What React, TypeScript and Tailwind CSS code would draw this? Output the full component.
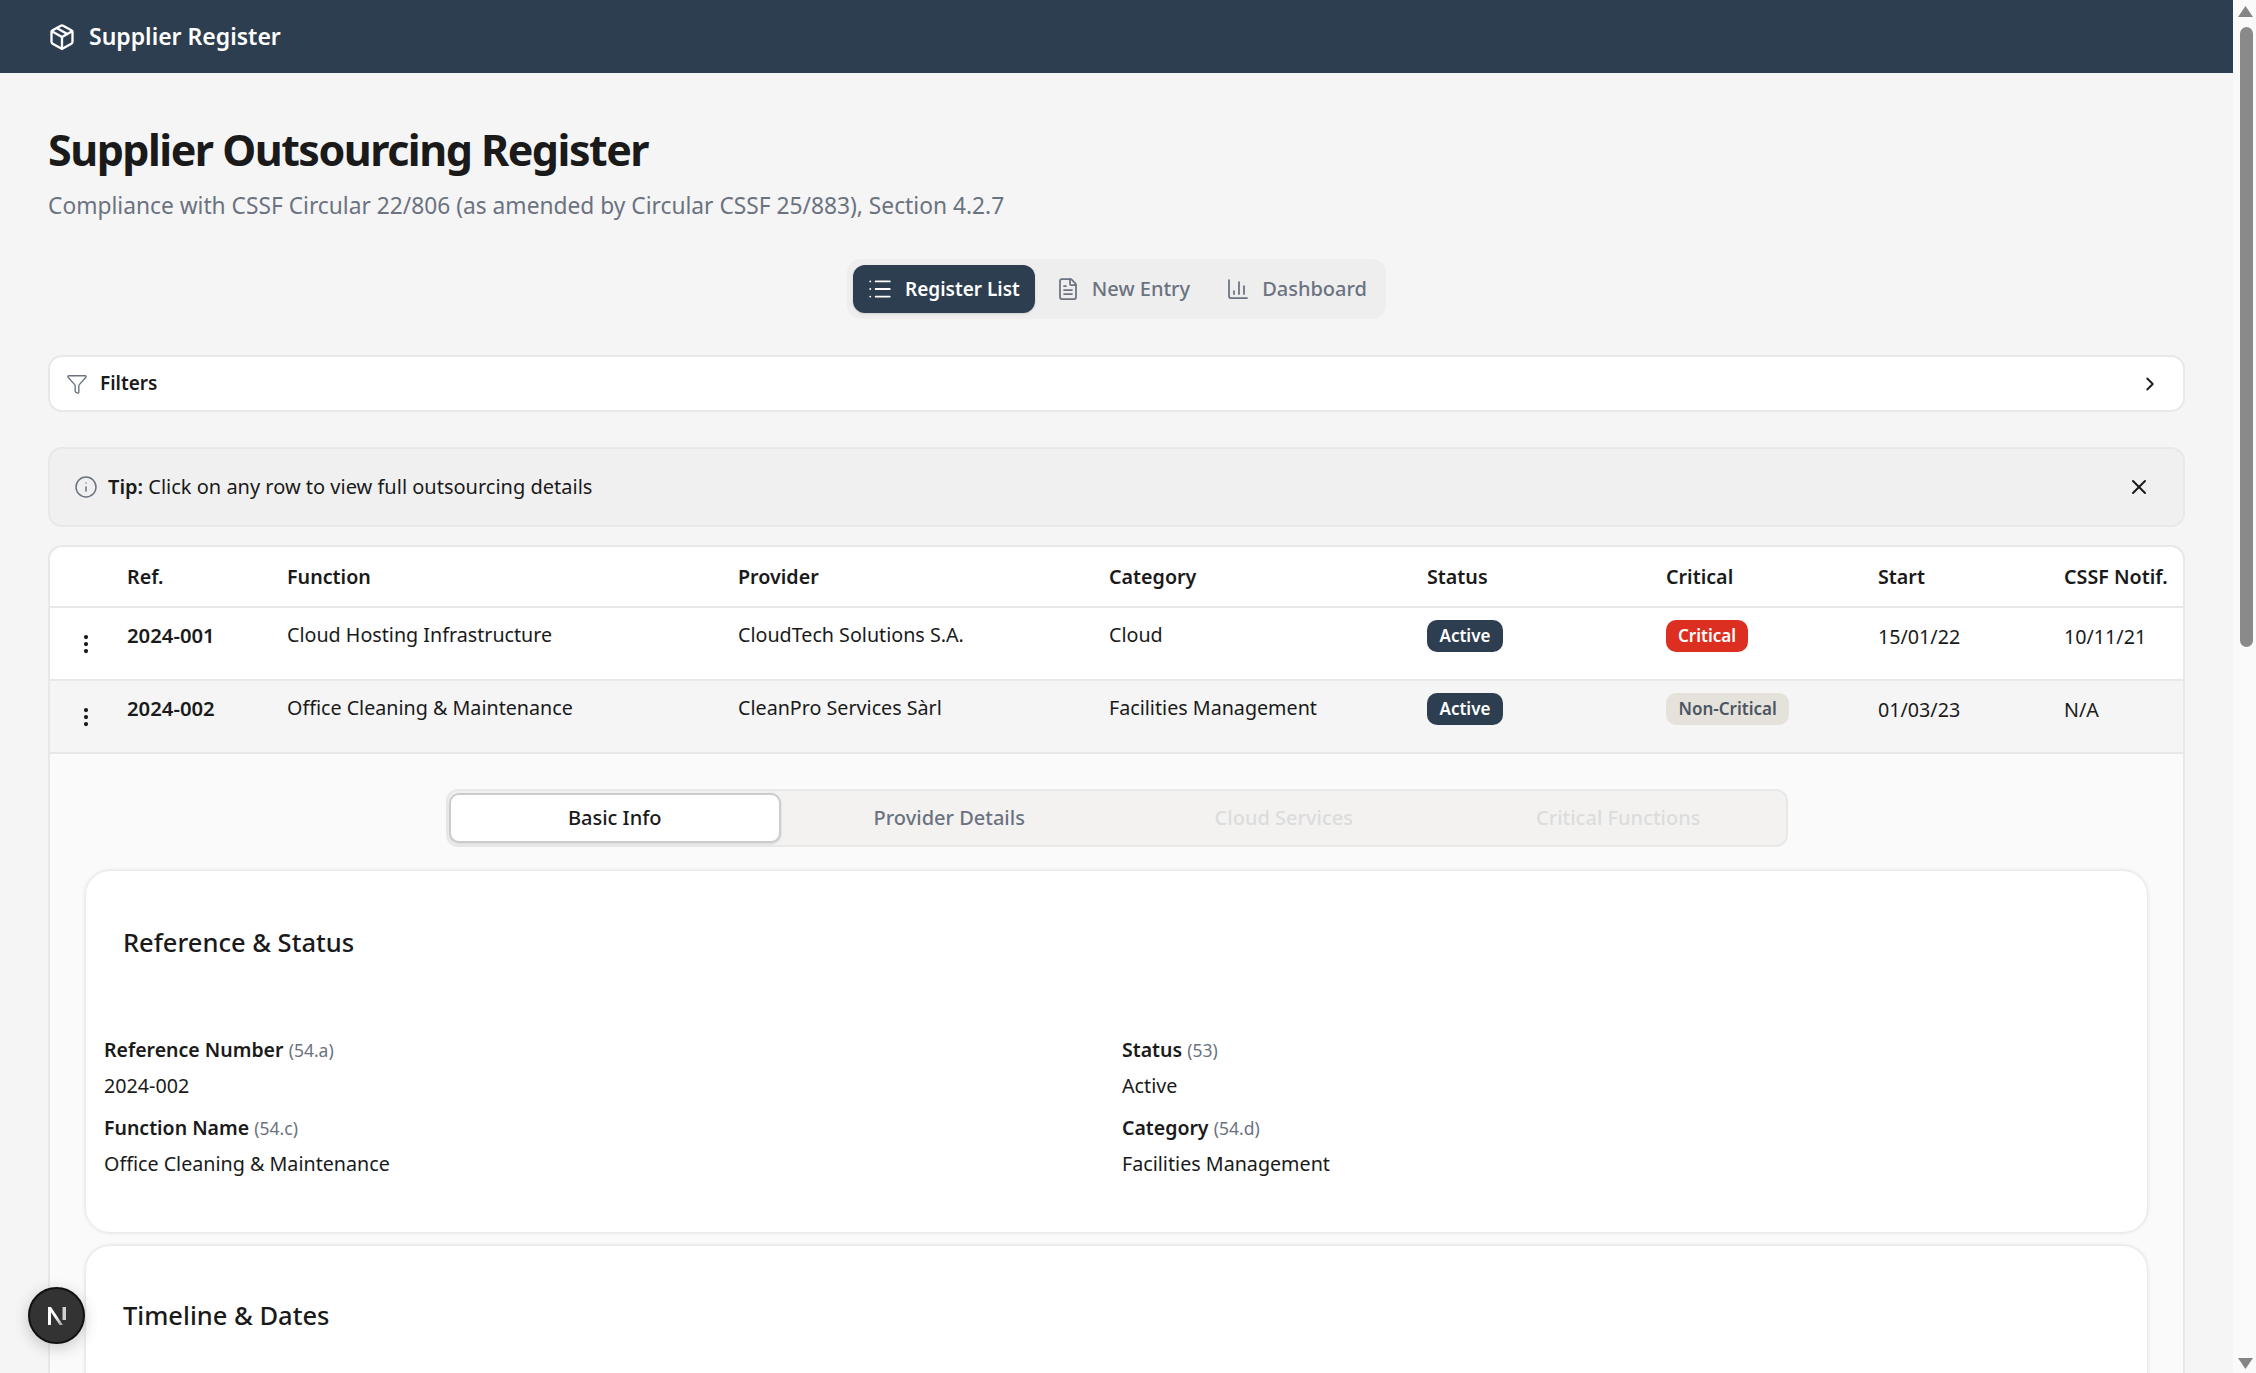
import { BarChart3, ChevronRight, FileText, Filter, Info, List, MoreVertical, Package, X } from "lucide-react";

const rows = [
  { ref: "2024-001", fn: "Cloud Hosting Infrastructure", provider: "CloudTech Solutions S.A.", category: "Cloud", critical: true, start: "15/01/22", notif: "10/11/21" },
  { ref: "2024-002", fn: "Office Cleaning & Maintenance", provider: "CleanPro Services Sàrl", category: "Facilities Management", critical: false, start: "01/03/23", notif: "N/A" },
];

const gridCols = "grid grid-cols-[77px_160px_451px_371px_318px_239px_212px_186px_1fr]";

function Field({ label, code, value }: { label: string; code: string; value: string }) {
  return (
    <div className="h-[78px]">
      <div className="h-[36px] leading-[36px]">
        <span className="text-[19.5px] font-semibold text-[#1a1a1a]">{label}</span>{" "}
        <span className="ml-[1px] text-[17.5px] text-[#6b7280]">({code})</span>
      </div>
      <div className="text-[19.7px] leading-[36px] text-[#1a1a1a]">{value}</div>
    </div>
  );
}

export default function App() {
  return (
    <div className="flex h-[1373px] overflow-hidden bg-[#f5f5f5] font-['Noto_Sans',sans-serif] text-[#1a1a1a]">
      <div className="relative min-w-0 flex-1 overflow-hidden">
        <header className="flex h-[73px] items-center gap-[13px] bg-[#2c3e50] pl-[48px] text-white">
          <Package size={28} strokeWidth={2} />
          <span className="text-[23px] font-semibold">Supplier Register</span>
        </header>

        <main className="px-[48px] pt-[49px]">
          <h1 className="text-[43px] leading-[56px] font-bold tracking-[-1.5px]">Supplier Outsourcing Register</h1>
          <p className="mt-[12px] text-[22.75px] leading-[32px] text-[#6b7280]">
            Compliance with CSSF Circular 22/806 (as amended by Circular CSSF 25/883), Section 4.2.7
          </p>

          <div className="mt-[37px] flex justify-center">
            <div className="flex h-[60px] items-center rounded-[14px] bg-[#eeeeee] pl-[6px] pr-[19px]">
              <button className="flex h-[48px] items-center gap-[12px] rounded-[12px] bg-[#2c3e50] pl-[14px] pr-[15px] text-[19px] font-semibold text-white shadow-sm">
                <List size={26} strokeWidth={1.75} />
                Register List
              </button>
              <button className="ml-[21px] flex items-center gap-[12px] text-[20px] font-medium text-[#6b7280]">
                <FileText size={24} strokeWidth={1.75} />
                New Entry
              </button>
              <button className="ml-[36px] flex items-center gap-[12px] text-[20px] font-medium text-[#6b7280]">
                <BarChart3 size={24} strokeWidth={1.75} />
                Dashboard
              </button>
            </div>
          </div>

          <div className="mt-[36px] flex h-[57px] items-center rounded-[14px] border-2 border-[#e8e8e8] bg-white pl-[16px] pr-[22px]">
            <Filter size={22} strokeWidth={1.5} className="text-[#6b7280]" />
            <span className="ml-[12px] text-[19px] font-semibold">Filters</span>
            <ChevronRight size={22} strokeWidth={2} className="ml-auto" />
          </div>

          <div className="mt-[35px] flex h-[80px] items-center rounded-[14px] border-2 border-[#e8e8e8] bg-[#f0f0f0] pl-[24px] pr-[32px]">
            <Info size={24} strokeWidth={1.5} className="text-[#6b7280]" />
            <span className="ml-[10px] text-[20px]">
              <span className="font-semibold">Tip:</span> Click on any row to view full outsourcing details
            </span>
            <X size={24} strokeWidth={2} className="ml-auto" />
          </div>

          <div className="mt-[18px] rounded-t-[14px] border-x-2 border-t-2 border-[#e8e8e8] bg-[#fafafa]">
            <div className={`${gridCols} h-[61px] items-center rounded-t-[14px] border-b-2 border-[#e8e8e8] bg-white text-[19.7px] font-semibold`}>
              <div className="col-start-2">Ref.</div>
              <div>Function</div>
              <div>Provider</div>
              <div>Category</div>
              <div>Status</div>
              <div>Critical</div>
              <div>Start</div>
              <div>CSSF Notif.</div>
            </div>

            {rows.map((r, i) => (
              <div key={r.ref} className={`${gridCols} h-[73px] border-b-2 border-[#e8e8e8] text-[19.7px] ${i === 0 ? "bg-white" : "bg-[#f5f5f5]"}`}>
                <div className="flex items-center justify-center">
                  <MoreVertical size={24} strokeWidth={2.25} className="ml-[-6px]" />
                </div>
                <div className="pt-[12px] text-[20.3px] font-semibold">{r.ref}</div>
                <div className="pt-[12px]">{r.fn}</div>
                <div className="pt-[12px]">{r.provider}</div>
                <div className="pt-[12px]">{r.category}</div>
                <div className="pt-[12px]">
                  <span className="inline-flex h-[32px] items-center rounded-[10px] bg-[#2c3e50] px-[12.5px] text-[17px] font-semibold text-white">Active</span>
                </div>
                <div className="pt-[12px]">
                  {r.critical ? (
                    <span className="inline-flex h-[32px] items-center rounded-[10px] bg-[#dc2f22] px-[12px] text-[17px] font-semibold text-white">Critical</span>
                  ) : (
                    <span className="inline-flex h-[32px] items-center rounded-[10px] bg-[#e5e2dc] px-[12.5px] text-[17px] font-semibold text-[#4b5563]">Non-Critical</span>
                  )}
                </div>
                <div className="pt-[14px]">{r.start}</div>
                <div className="pt-[14px]">{r.notif}</div>
              </div>
            ))}

            <div className="px-[36px] pt-[35px]">
              <div className="mx-auto grid h-[58px] w-[1342px] grid-cols-4 items-center rounded-[12px] border-2 border-[#e8e8e8] bg-[#f3f2f1] text-[20px] font-medium">
                <div className="mx-[1px] flex h-[50px] items-center justify-center rounded-[10px] border-2 border-[#cccccc] bg-white text-[#1a1a1a] shadow-sm">Basic Info</div>
                <div className="text-center text-[#6b7280]">Provider Details</div>
                <div className="text-center text-[#dcdcdc]">Cloud Services</div>
                <div className="text-center text-[#dcdcdc]">Critical Functions</div>
              </div>

              <section className="mt-[24px] h-[361px] rounded-[24px] bg-white px-[18px] shadow-[0_0_4px_rgba(0,0,0,0.16)]">
                <h2 className="pl-[19px] pt-[52px] text-[25.5px] leading-[38px] font-medium">Reference &amp; Status</h2>
                <div className="mt-[71px] grid grid-cols-2 gap-x-[11px]">
                  <Field label="Reference Number" code="54.a" value="2024-002" />
                  <Field label="Status" code="53" value="Active" />
                  <Field label="Function Name" code="54.c" value="Office Cleaning & Maintenance" />
                  <Field label="Category" code="54.d" value="Facilities Management" />
                </div>
              </section>

              <section className="mt-[14px] h-[300px] rounded-[24px] bg-white px-[18px] shadow-[0_0_4px_rgba(0,0,0,0.16)]">
                <h2 className="pl-[19px] pt-[50px] text-[25.5px] leading-[38px] font-medium">Timeline &amp; Dates</h2>
              </section>
            </div>
          </div>
        </main>

        <div className="absolute bottom-[29px] left-[28px] flex h-[57px] w-[57px] items-center justify-center rounded-full border-2 border-[#111111] bg-[#333333] shadow-[0_4px_16px_rgba(0,0,0,0.2)]">
          <svg width="18" height="18" viewBox="0 0 18 18" fill="none">
            <defs>
              <linearGradient id="n-fade" x1="0" y1="0" x2="1" y2="1">
                <stop offset="0.5" stopColor="#ffffff" />
                <stop offset="1" stopColor="#999999" />
              </linearGradient>
            </defs>
            <path d="M0 18V0h3l12 18h-3.4L3 5.2V18z" fill="url(#n-fade)" />
            <path d="M14.5 0H18v13h-3.5z" fill="#d0d0d0" />
          </svg>
        </div>
      </div>

      <div className="flex w-[23px] flex-col items-center bg-[#fafafa]">
        <svg width="15" height="11" viewBox="0 0 15 11" className="mt-[6px] ml-[1px]"><path d="M7.5 0L15 11H0z" fill="#858585" /></svg>
        <div className="ml-[3px] mt-[10px] h-[620px] w-[13px] rounded-full bg-[#8a8a8a]" />
        <svg width="15" height="11" viewBox="0 0 15 11" className="ml-[1px] mt-auto mb-[4px]"><path d="M7.5 11L0 0h15z" fill="#858585" /></svg>
      </div>
    </div>
  );
}
